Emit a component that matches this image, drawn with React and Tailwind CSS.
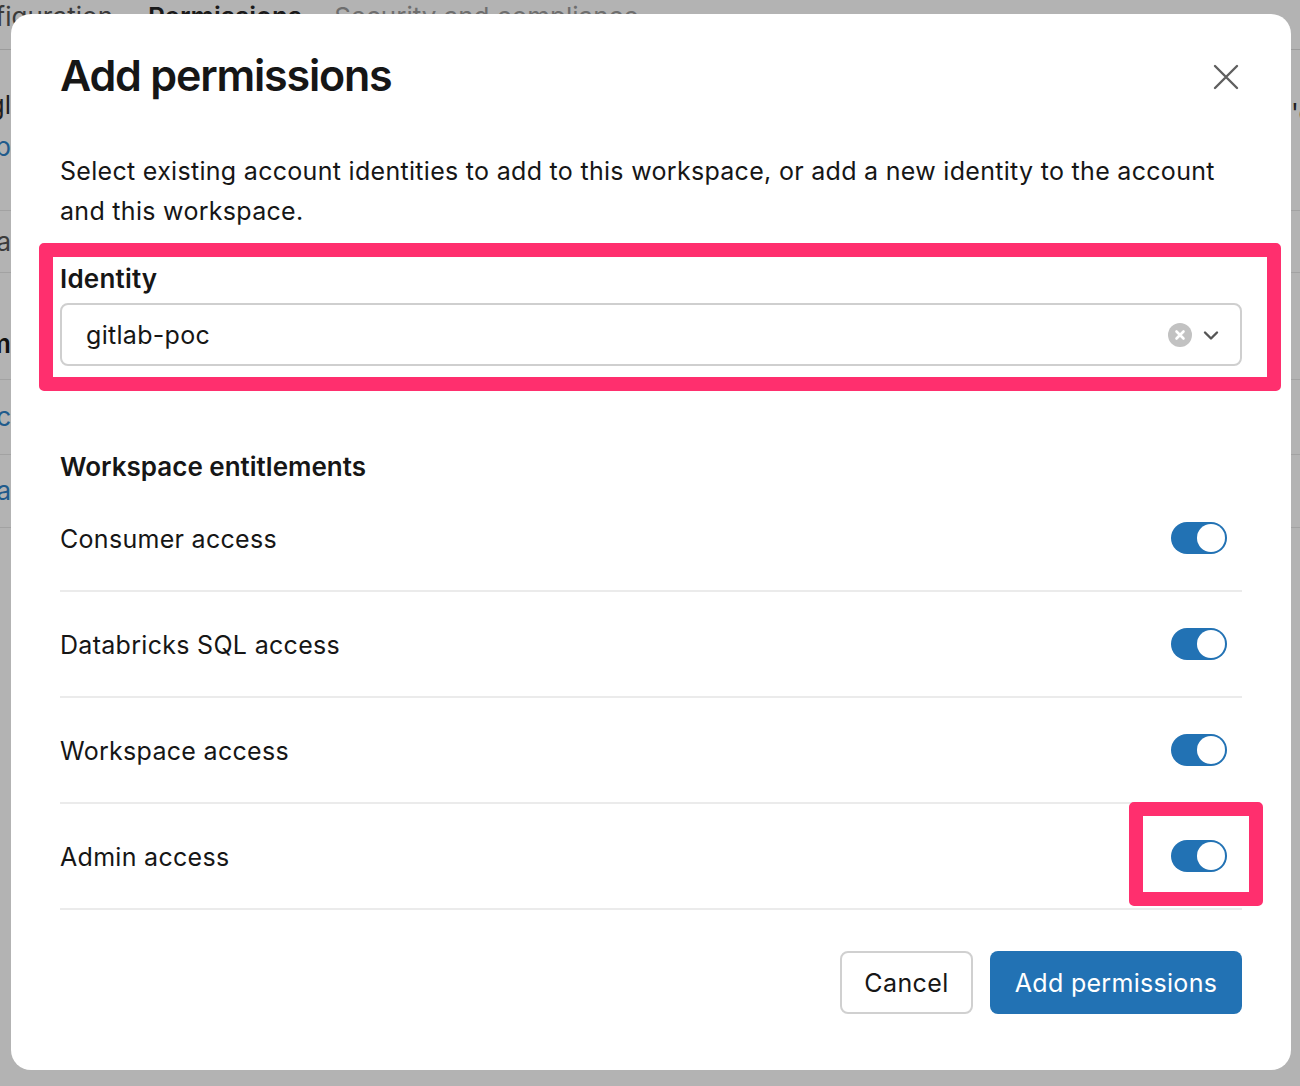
import React from "react";

function Edge({ children, className = "" }) {
  return (
    <div className={"flex w-[11px] justify-end whitespace-nowrap " + className}>
      {children}
    </div>
  );
}

function Toggle() {
  return (
    <div className="flex h-[32px] w-[56px] items-center justify-end rounded-full bg-[#2272b4] p-[2px]">
      <div className="h-[28px] w-[28px] rounded-full bg-white" />
    </div>
  );
}

function Row({ label }) {
  return (
    <div className="flex h-[106px] items-center justify-between border-b-2 border-[#ebebeb] pr-[15px]">
      <span className="mt-[2px] text-[25px] leading-[36px] tracking-[0.3px] text-[#161616]">{label}</span>
      <Toggle />
    </div>
  );
}

export default function App() {
  return (
    <div className="relative h-[1086px] w-[1300px] overflow-hidden bg-[#b3b3b3] font-['Inter',sans-serif]">
      {/* dimmed page behind */}
      <div className="flex flex-col text-[26px] leading-[32px]">
        <div className="flex h-[50px] items-start border-b border-[#9b9b9b]">
          <div className="mt-[1px] flex w-[113px] justify-end whitespace-nowrap text-[#3a3a3a]">Configuration</div>
          <div className="ml-[35px] mt-[1px] whitespace-nowrap font-semibold text-[#1a1a1a]">Permissions</div>
          <div className="ml-[32px] mt-[1px] whitespace-nowrap text-[#6e6e6e]">Security and compliance</div>
        </div>
        <div className="flex h-[161px] justify-between border-b border-[#a2a2a2] pt-[39px]">
          <div className="flex flex-col gap-[10px]">
            <Edge className="text-[#202020]">Settingl</Edge>
            <Edge className="text-[#1f5b8c]">Manage p</Edge>
          </div>
          <div className="mt-[8px] w-[9px] overflow-visible whitespace-nowrap text-[#202020]">'c</div>
        </div>
        <div className="flex h-[62px] items-center border-b border-[#a2a2a2]">
          <Edge className="text-[#3c3c3c]">Userna</Edge>
        </div>
        <div className="flex h-[107px] items-end border-b border-[#a2a2a2] pb-[19px]">
          <Edge className="font-semibold text-[#111]">Adm</Edge>
        </div>
        <div className="flex h-[75px] items-center border-b border-[#a2a2a2]">
          <Edge className="text-[#1f5b8c]">abc</Edge>
        </div>
        <div className="flex h-[73px] items-center border-b border-[#a2a2a2]">
          <Edge className="text-[#1f5b8c]">gitla</Edge>
        </div>
      </div>

      {/* modal overlay */}
      <div className="absolute left-[11px] top-[14px] flex h-[1056px] w-[1280px] flex-col rounded-[20px] bg-white px-[49px] pt-[35px] text-[#161616]">
        <div className="flex h-[52px] items-center justify-between">
          <h1 className="text-[43px] font-semibold leading-[52px] tracking-[-1.2px] text-[#161616]">Add permissions</h1>
          <button className="mr-[3px] mt-[4px] flex h-[26px] w-[26px] items-center justify-center">
            <svg width="26" height="26" viewBox="0 0 26 26" fill="none" stroke="#5f5f5f" strokeWidth="2.4" strokeLinecap="round">
              <path d="M2 2 L24 24 M24 2 L2 24" />
            </svg>
          </button>
        </div>

        <p className="mt-[50px] text-[25px] leading-[40px] tracking-[0.3px] text-[#161616]">
          Select existing account identities to add to this workspace, or add a new identity to the account
          <br />
          and this workspace.
        </p>

        <div className="mt-[30px] text-[26px] font-semibold leading-[36px] tracking-[0.2px]">Identity</div>
        <div className="mt-[6px] flex h-[63px] items-center justify-between rounded-[8px] border-2 border-[#cfcfcf] pl-[24px] pr-[20px]">
          <span className="text-[25px] leading-[36px] tracking-[0.3px]">gitlab-poc</span>
          <div className="flex items-center gap-[10px]">
            <svg width="24" height="24" viewBox="0 0 24 24">
              <circle cx="12" cy="12" r="12" fill="#c2c2c2" />
              <path d="M8.5 8.5 L15.5 15.5 M15.5 8.5 L8.5 15.5" stroke="#fff" strokeWidth="2.6" strokeLinecap="round" />
            </svg>
            <svg width="18" height="18" viewBox="0 0 18 18" fill="none">
              <path d="M3 6.5 L9 12.5 L15 6.5" stroke="#555" strokeWidth="2.4" strokeLinecap="round" strokeLinejoin="round" />
            </svg>
          </div>
        </div>

        <div className="mt-[83px] text-[26px] font-semibold leading-[36px] tracking-[0px]">Workspace entitlements</div>
        <div className="mt-[1px] flex flex-col">
          <Row label="Consumer access" />
          <Row label="Databricks SQL access" />
          <Row label="Workspace access" />
          <Row label="Admin access" />
        </div>

        <div className="mt-[41px] flex justify-end gap-[17px]">
          <button className="flex h-[63px] w-[133px] items-center justify-center rounded-[8px] border-2 border-[#d0d0d0] bg-white pt-[2px] text-[25px] tracking-[0.4px] text-[#161616]">
            Cancel
          </button>
          <button className="flex h-[63px] w-[252px] items-center justify-center rounded-[8px] bg-[#2272b4] pt-[2px] text-[25px] tracking-[0.3px] text-white">
            Add permissions
          </button>
        </div>

        {/* annotation highlights */}
        <div className="pointer-events-none absolute left-[28px] top-[229px] h-[148px] w-[1242px] rounded-[5px] border-[14px] border-[#ff2f6e]" />
        <div className="pointer-events-none absolute left-[1118px] top-[788px] h-[104px] w-[134px] rounded-[5px] border-[14px] border-[#ff2f6e]" />
      </div>
    </div>
  );
}
